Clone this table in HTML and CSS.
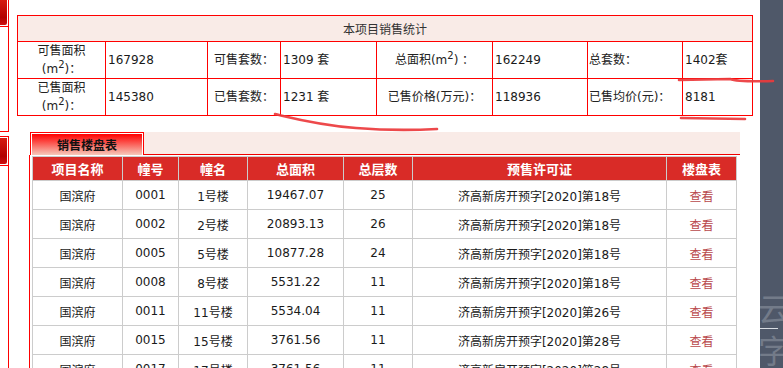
FILE: index.html
```html
<!DOCTYPE html>
<html lang="zh-CN">
<head>
<meta charset="utf-8">
<title>本项目销售统计</title>
<link rel="stylesheet" href="styles.css">
</head>
<body>
<div class="page">
  <aside class="side">
    <div class="side-box side-box-first">
      <div class="side-item"><span class="side-btn"></span></div>
    </div>
    <div class="side-box side-box-second">
      <div class="side-item"><span class="side-btn"></span></div>
    </div>
  </aside>

  <main class="main">
    <table class="stats">
      <colgroup>
        <col class="c1"><col class="c2"><col class="c3"><col class="c4">
        <col class="c5"><col class="c6"><col class="c7"><col class="c8">
      </colgroup>
      <tr class="stats-head"><th colspan="8">本项目销售统计</th></tr>
      <tr class="stats-row">
        <td class="lbl">可售面积<br>(m<sup>2</sup>)：</td>
        <td class="val">167928</td>
        <td class="lbl">可售套数：</td>
        <td class="val">1309 套</td>
        <td class="lbl">总面积(m<sup>2</sup>) ：</td>
        <td class="val">162249</td>
        <td class="lbl lbl-left">总套数：</td>
        <td class="val">1402套</td>
      </tr>
      <tr class="stats-row">
        <td class="lbl">已售面积<br>(m<sup>2</sup>)：</td>
        <td class="val">145380</td>
        <td class="lbl">已售套数：</td>
        <td class="val">1231 套</td>
        <td class="lbl">已售价格(万元)：</td>
        <td class="val">118936</td>
        <td class="lbl lbl-left">已售均价(元)：</td>
        <td class="val">8181</td>
      </tr>
    </table>

    <section class="section">
      <div class="tabbar">
        <div class="tab"><span class="tab-inner">销售楼盘表</span></div>
        <div class="tab-rest"></div>
      </div>
      <div class="panel">
        <table class="list">
          <colgroup>
            <col class="l1"><col class="l2"><col class="l3"><col class="l4">
            <col class="l5"><col class="l6"><col class="l7">
          </colgroup>
          <tr class="list-head">
            <th>项目名称</th><th>幢号</th><th>幢名</th><th>总面积</th><th>总层数</th><th>预售许可证</th><th>楼盘表</th>
          </tr>
          <tr><td>国滨府</td><td>0001</td><td>1号楼</td><td>19467.07</td><td>25</td><td>济高新房开预字[2020]第18号</td><td class="view">查看</td></tr>
          <tr><td>国滨府</td><td>0002</td><td>2号楼</td><td>20893.13</td><td>26</td><td>济高新房开预字[2020]第18号</td><td class="view">查看</td></tr>
          <tr><td>国滨府</td><td>0005</td><td>5号楼</td><td>10877.28</td><td>24</td><td>济高新房开预字[2020]第18号</td><td class="view">查看</td></tr>
          <tr><td>国滨府</td><td>0008</td><td>8号楼</td><td>5531.22</td><td>11</td><td>济高新房开预字[2020]第18号</td><td class="view">查看</td></tr>
          <tr><td>国滨府</td><td>0011</td><td>11号楼</td><td>5534.04</td><td>11</td><td>济高新房开预字[2020]第26号</td><td class="view">查看</td></tr>
          <tr><td>国滨府</td><td>0015</td><td>15号楼</td><td>3761.56</td><td>11</td><td>济高新房开预字[2020]第28号</td><td class="view">查看</td></tr>
          <tr><td>国滨府</td><td>0017</td><td>17号楼</td><td>3761.56</td><td>11</td><td>济高新房开预字[2020]第28号</td><td class="view">查看</td></tr>
        </table>
      </div>
    </section>
  </main>

  <div class="strip">
    <span class="mark mark-a">云</span>
    <span class="mark-line"></span>
    <span class="mark mark-b">字</span>
  </div>
</div>

<svg class="ink" width="783" height="368" viewBox="0 0 783 368" aria-hidden="true">
  <path d="M275 114 C292 118 318 125 356 128 S418 130 437 129" />
  <path d="M679 80 L730 79 Q738 82 773 81" />
  <path d="M681 118 L745 119" />
</svg>
</body>
</html>
```

FILE: styles.css
```css
html, body {
  margin: 0;
  padding: 0;
  background: #fff;
}

body {
  font-family: "DejaVu Sans", "Noto Sans CJK SC", sans-serif;
  font-size: 12px;
  color: #1a1a1a;
  overflow: hidden;
}

.page {
  display: flex;
  width: 783px;
  height: 368px;
  overflow: hidden;
}

/* left menu stub */
.side {
  width: 9px;
  flex: none;
  display: flex;
  flex-direction: column;
}

.side-box {
  box-sizing: border-box;
  width: 9px;
  border-right: 1px solid #f00;
}

.side-box-first {
  height: 132px;
  border-bottom: 1px solid #f00;
}

.side-box-second {
  margin-top: 4px;
  flex: 1;
  border-top: 1px solid #f00;
  padding-top: 1px;
}

.side-item {
  display: flex;
  padding: 0 1px 1px 0;
  border-bottom: 1px solid #f00;
}

.side-btn {
  display: block;
  width: 7px;
  height: 26px;
  background: linear-gradient(#d61a10, #b30000 70%, #c11 100%);
  border-bottom-right-radius: 2px;
}

.side-box-first .side-btn {
  height: 25px;
}

/* main */
.main {
  flex: 1;
  min-width: 0;
  padding: 15px 0 0 8px;
}

.stats {
  width: 735px;
  table-layout: fixed;
  border-collapse: collapse;
  border: 1px solid #f00;
}

.stats .c1 { width: 88px; }
.stats .c2 { width: 102px; }
.stats .c3 { width: 73px; }
.stats .c4 { width: 96px; }
.stats .c5 { width: 116px; }
.stats .c6 { width: 95px; }
.stats .c7 { width: 95px; }
.stats .c8 { width: 70px; }

.stats th,
.stats td {
  border: 1px solid #f00;
  padding: 0 2px;
  vertical-align: middle;
}

.stats-head th {
  height: 25px;
  background: #f9ebe7;
  font-weight: normal;
  color: #333;
  text-align: center;
}

.stats-row td {
  height: 36px;
  line-height: 18px;
}

.stats .lbl {
  text-align: center;
  color: #222;
}

.stats .lbl-left {
  text-align: left;
  padding-left: 1px;
}

.stats .val {
  text-align: left;
}

.stats sup {
  font-size: 10px;
  line-height: 0;
  vertical-align: 5px;
}

/* sales list section */
.section {
  width: 711px;
  margin: 16px 0 0 12px;
}

.tabbar {
  display: flex;
  height: 23px;
}

.tab {
  box-sizing: border-box;
  width: 114px;
  height: 23px;
  margin-left: 1px;
  border: 1px solid #f00;
  border-bottom: none;
  padding: 1px 1px 0;
  background: #fff;
  display: flex;
}

.tab-inner {
  flex: 1;
  display: flex;
  align-items: center;
  justify-content: center;
  background: linear-gradient(#ff0000, #f6c8ba);
  font-weight: bold;
  color: #111;
  font-size: 12px;
}

.tab-rest {
  flex: 1;
  background: #f9ebe7;
  border-bottom: 1px solid #e00;
}

.panel {
  border-left: 1px solid #f00;
  padding: 1px 3px 0 2px;
}

.list {
  width: 705px;
  table-layout: fixed;
  border-collapse: collapse;
  border: 1px solid #ccc;
}

.list .l1 { width: 90px; }
.list .l2 { width: 56px; }
.list .l3 { width: 69px; }
.list .l4 { width: 96px; }
.list .l5 { width: 69px; }
.list .l6 { width: 254px; }
.list .l7 { width: 70px; }

.list th,
.list td {
  border: 1px solid #ccc;
  padding: 0;
  text-align: center;
  vertical-align: middle;
}

.list-head th {
  height: 23px;
  background: #d92b27;
  color: #fff;
  font-size: 13px;
  font-weight: bold;
}

.list td {
  height: 28px;
  color: #1a1a1a;
}

.list .view {
  color: #b9484b;
}

/* right dark strip */
.strip {
  width: 23px;
  flex: none;
  background: #4f5869;
  display: flex;
  flex-direction: column;
  padding-top: 288px;
  overflow: hidden;
  box-sizing: border-box;
}

.mark {
  display: block;
  flex: none;
  overflow: hidden;
  font-family: "Noto Sans CJK SC", sans-serif;
  font-size: 32px;
  color: #737b89;
  white-space: nowrap;
  margin-left: -2px;
}

.mark-a {
  height: 38px;
  line-height: 38px;
}

.mark-line {
  display: block;
  flex: none;
  height: 1px;
  width: 18px;
  background: #d8dce2;
  margin: 2px 0 1px;
}

.mark-b {
  height: 38px;
  line-height: 38px;
}

/* hand drawn highlight strokes */
.ink {
  position: absolute;
  left: 0;
  top: 0;
  pointer-events: none;
}

.ink path {
  fill: none;
  stroke: #ec3a3c;
  stroke-width: 2.6;
  stroke-linecap: round;
  stroke-opacity: 0.92;
}
```
